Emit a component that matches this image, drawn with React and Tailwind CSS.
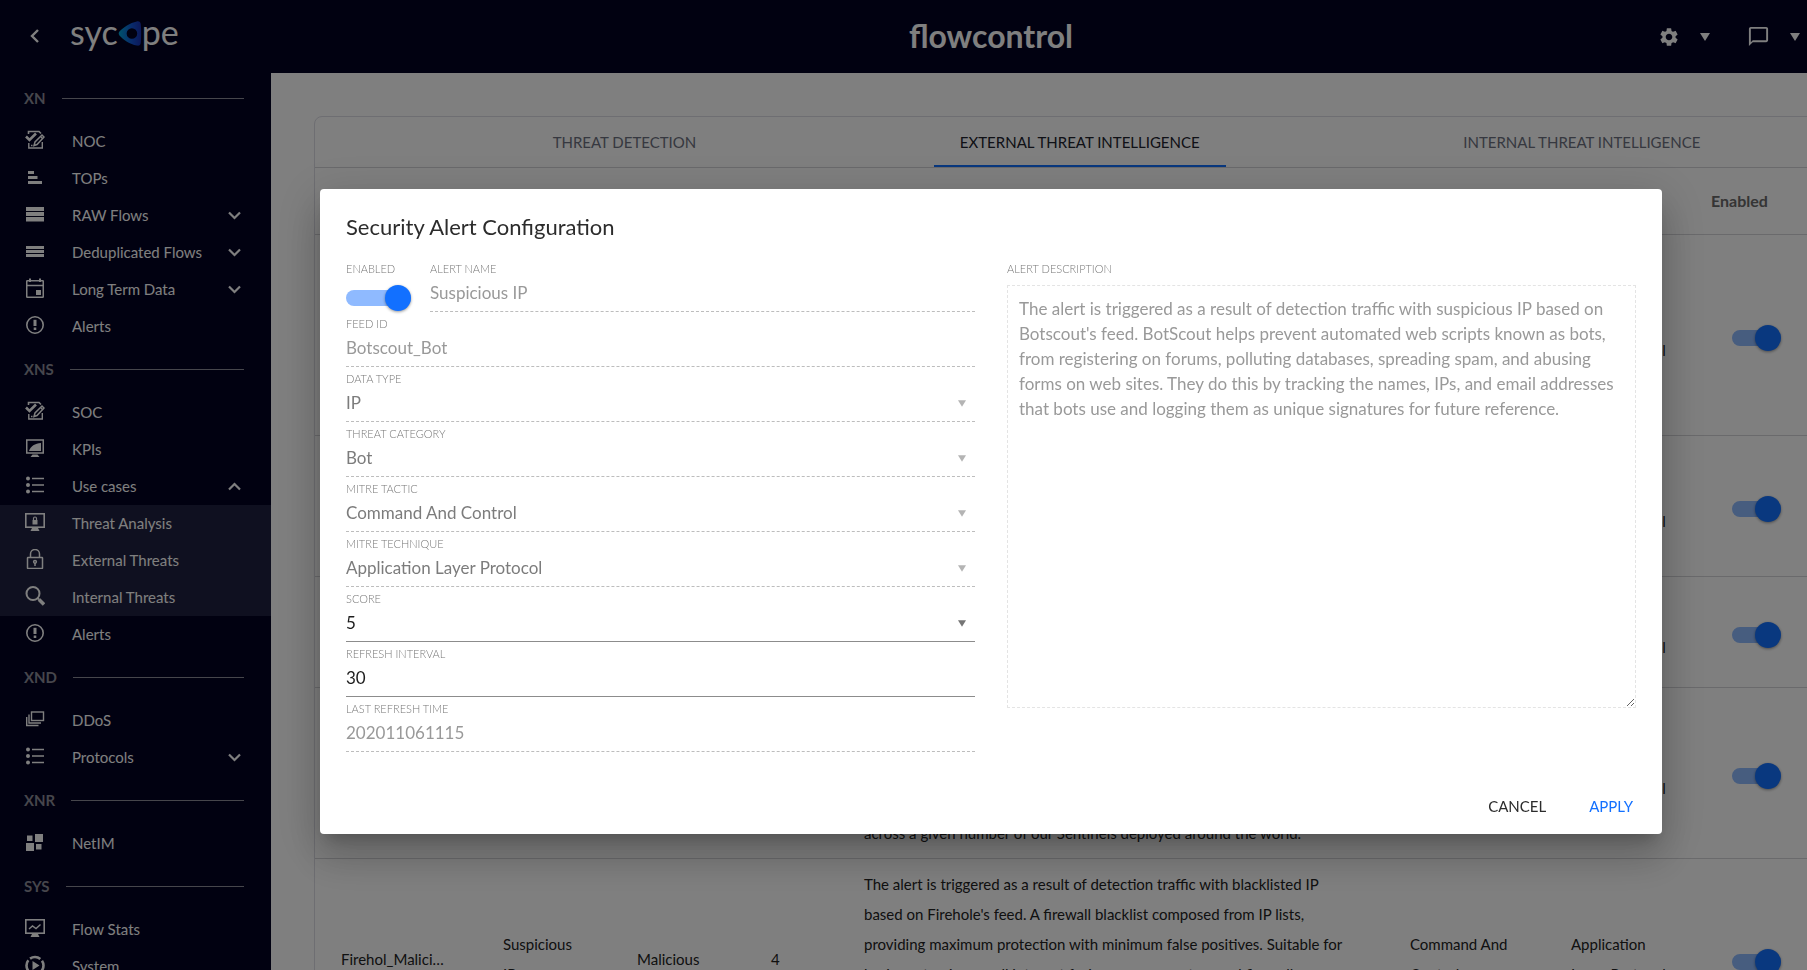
import { Fragment, useState } from "react";
import { MdSettings, MdChatBubbleOutline } from "react-icons/md";

const icons = {
  edit: (
    <g fill="none" stroke="currentColor">
      <path d="M3.5 4V1.5H14L16 3.5" strokeWidth="1.6" />
      <path d="M1 6.5L4.5 10L11 3.5" strokeWidth="2.6" />
      <path d="M3.8 13V18H17.3V12" strokeWidth="1.4" />
      <path d="M9 15.5L10 12L17 5L19 7L12 14.5Z" strokeWidth="1.5" />
      <path d="M15.5 6.5L17.5 8.5" strokeWidth="1.2" />
      <path d="M6 15.5H7.5" strokeWidth="1.4" />
    </g>
  ),
  bars: (
    <g fill="currentColor">
      <path d="M3 4H9V7H3zM3 9H12.500V12H3zM3 14H17V17H3z" />
    </g>
  ),
  rows4: (
    <g fill="currentColor">
      <path d="M1 3H19V7H1zM1 8H19V12H1zM1 13H19V17.500H1z" />
    </g>
  ),
  rows3: (
    <g fill="currentColor">
      <path d="M1 5H19V8H1zM1 9H19V12H1zM1 13H19V16H1z" />
    </g>
  ),
  calendar: (
    <g fill="none" stroke="currentColor" strokeWidth="1.5">
      <rect x="1.75" y="2.75" width="16.5" height="16.500" rx="0.5" />
      <path d="M2 7.500H18" />
      <path d="M5 0.500V4M15 0.500V4" strokeWidth="2" />
      <rect x="11" y="12" width="5" height="5" fill="currentColor" stroke="none" />
    </g>
  ),
  alert: (
    <g fill="none" stroke="currentColor">
      <circle cx="10" cy="10" r="8.200" strokeWidth="1.6" />
      <path d="M10 4.800V11" strokeWidth="3" />
      <path d="M10 12.500V15" strokeWidth="2.600" />
    </g>
  ),
  kpi: (
    <g fill="none" stroke="currentColor" strokeWidth="1.5">
      <rect x="1.75" y="2" width="16.500" height="13" />
      <path d="M4 13C5.500 8 10 5.500 16 5V13Z" fill="currentColor" stroke="none" />
      <path d="M7.500 16.500H12.500L14.500 19H5.500Z" fill="currentColor" stroke="none" />
    </g>
  ),
  list: (
    <g stroke="currentColor" strokeWidth="1.4" fill="none">
      <path d="M7 3.500H19M7 10H19M7 16.500H19" />
      <g fill="currentColor" stroke="none">
        <circle cx="3" cy="3.500" r="2" />
        <circle cx="3" cy="10" r="2" />
        <circle cx="3" cy="16.500" r="2" />
      </g>
    </g>
  ),
  screenLock: (
    <g fill="none" stroke="currentColor">
      <rect x="0.800" y="1.800" width="18.400" height="13.400" strokeWidth="1.6" />
      <path d="M7.500 8H12.500V12.500H7.500Z" fill="currentColor" stroke="none" />
      <path d="M8.500 8V6.500A1.500 1.500 0 0 1 11.500 6.500V8" strokeWidth="1.200" />
      <path d="M7 16H13L14.500 19H5.500Z" fill="currentColor" stroke="none" />
    </g>
  ),
  lock: (
    <g fill="none" stroke="currentColor" strokeWidth="1.5">
      <rect x="2.500" y="8.500" width="15" height="11" rx="0.5" />
      <path d="M5.500 8.500V5A4.500 4.500 0 0 1 14.500 5V8.500" />
      <circle cx="10" cy="12.800" r="1.400" />
      <path d="M10 14V17" />
    </g>
  ),
  search: (
    <g fill="none" stroke="currentColor">
      <circle cx="8" cy="7.500" r="6.500" strokeWidth="2" />
      <path d="M12.500 12L14 13.500" strokeWidth="2" />
      <path d="M14 13.500L19 18.500" strokeWidth="3.600" />
    </g>
  ),
  stack: (
    <g fill="none" stroke="currentColor" strokeWidth="1.4">
      <rect x="6.500" y="3" width="12" height="8.500" />
      <path d="M4 5.500V14H16M1.700 8V16.500H13.500" />
    </g>
  ),
  tiles: (
    <g fill="currentColor">
      <path d="M2 3.500H7.500V9H2zM10 2H18V10H10zM1 11H9V19H1zM11 12H16.500V17.500H11z" />
    </g>
  ),
  stats: (
    <g fill="none" stroke="currentColor" strokeWidth="1.6">
      <rect x="0.800" y="1.800" width="18.400" height="13.400" />
      <path d="M4 11L7.500 8L11 10.500L15.500 6.500" strokeWidth="1.400" />
      <path d="M7 16H13L14.500 19H5.500Z" fill="currentColor" stroke="none" />
    </g>
  ),
  system: (
    <g fill="none" stroke="currentColor" strokeWidth="2.600">
      <circle cx="10" cy="10.500" r="8.500" strokeDasharray="11 2.350" strokeDashoffset="5.500" />
      <path d="M7.500 6L14.500 10.500L7.500 15Z" fill="currentColor" stroke="none" />
    </g>
  ),
};

const sections = [
  {
    title: "XN",
    items: [
      { label: "NOC", icon: "edit" },
      { label: "TOPs", icon: "bars" },
      { label: "RAW Flows", icon: "rows4", arrow: "down" },
      { label: "Deduplicated Flows", icon: "rows3", arrow: "down" },
      { label: "Long Term Data", icon: "calendar", arrow: "down" },
      { label: "Alerts", icon: "alert" },
    ],
  },
  {
    title: "XNS",
    items: [
      { label: "SOC", icon: "edit" },
      { label: "KPIs", icon: "kpi" },
      { label: "Use cases", icon: "list", arrow: "up" },
      { label: "Threat Analysis", icon: "screenLock", sub: true },
      { label: "External Threats", icon: "lock", sub: true },
      { label: "Internal Threats", icon: "search", sub: true },
      { label: "Alerts", icon: "alert" },
    ],
  },
  {
    title: "XND",
    items: [
      { label: "DDoS", icon: "stack" },
      { label: "Protocols", icon: "list", arrow: "down" },
    ],
  },
  { title: "XNR", items: [{ label: "NetIM", icon: "tiles" }] },
  {
    title: "SYS",
    items: [
      { label: "Flow Stats", icon: "stats" },
      { label: "System", icon: "system" },
    ],
  },
];

const tabs = [
  "THREAT DETECTION",
  "EXTERNAL THREAT INTELLIGENCE",
  "INTERNAL THREAT INTELLIGENCE",
];

const feeds = [
  {
    id: "Botscout_Bot",
    category: "Bot",
    score: 5,
    description:
      "The alert is triggered as a result of detection traffic with\nsuspicious IP based on Botscout's feed. BotScout helps prevent\nautomated web scripts known as bots, from registering on\nforums, polluting databases, spreading spam, and abusing forms\non web sites. They do this by tracking the names, IPs, and email\naddresses that bots use.",
  },
  {
    id: "Cruzit_Attack",
    category: "Attack",
    score: 4,
    description:
      "The alert is triggered as a result of detection traffic with\nsuspicious IP based on CruzIT's feed. The list contains\nIP addresses of compromised machines\nscanning for vulnerabilities.",
  },
  {
    id: "Dshield_Scan",
    category: "Scanner",
    score: 4,
    description:
      "The alert is triggered as a result of detection traffic with\nsuspicious IP based on DShield's feed. The list\nsummarizes the top attacking subnets.",
  },
  {
    id: "Sentinel_Bad",
    category: "Malicious",
    score: 5,
    description:
      "The alert is triggered as a result of detection traffic with\nblacklisted IP based on the Sentinel's feed.\nThe list contains the most active\nbad IP addresses detected\nacross a given number of our Sentinels deployed around the world.",
  },
  {
    id: "Firehol_Malicious",
    category: "Malicious",
    score: 4,
    description:
      "The alert is triggered as a result of detection traffic with blacklisted IP\nbased on Firehole's feed. A firewall blacklist composed from IP lists,\nproviding maximum protection with minimum false positives. Suitable for\nbasic protection on all internet facing servers, routers and firewalls.\nIt includes the feeds of fullbogons,\nspamhaus and dshield.",
  },
];

function Caret({ className }) {
  return (
    <svg viewBox="0 0 10 8" className={className} fill="currentColor" aria-hidden="true">
      <path d="M0 0H10L5 8Z" />
    </svg>
  );
}

function Chevron({ up }) {
  return (
    <svg width="13" height="9" viewBox="0 0 13 9" fill="none" stroke="currentColor" strokeWidth="2.2">
      <path d={up ? "M1 7.500L6.500 2L12 7.500" : "M1 1.500L6.500 7L12 1.500"} />
    </svg>
  );
}

function Header() {
  return (
    <header className="grid h-[73px] shrink-0 grid-cols-[1fr_auto_1fr] items-center bg-[#020222] text-white">
      <div className="flex items-center pb-2.5 pl-[30px]">
        <button aria-label="Back" className="pt-2">
          <svg width="10" height="14" viewBox="0 0 10 14" fill="none" stroke="currentColor" strokeWidth="2.400">
            <path d="M8 1L2 7L8 13" />
          </svg>
        </button>
        <a href="#" aria-label="sycope" className="ml-[30px] flex items-center text-[34px] leading-10">
          <span>syc</span>
          <svg width="24" height="25" viewBox="0 0 24 26" className="mt-1" aria-hidden="true">
            <defs>
              <linearGradient id="logo" x1="0" y1="0" x2="1" y2="0">
                <stop offset="0" stopColor="#00a6d6" />
                <stop offset="0.600" stopColor="#1254d8" />
                <stop offset="1" stopColor="#1a2fb0" />
              </linearGradient>
            </defs>
            <path
              fill="url(#logo)"
              fillRule="evenodd"
              d="M1 11C0 12.500 0 13.500 1 15C5 19.500 12 24 19 25.500C21.500 26 23 25 23.200 22.500C23.800 16 23.800 10 23.200 3.500C23 1 21.500 0 19 0.500C12 2 5 6.500 1 11ZM14 7.500A5.500 5.500 0 1 1 14 18.500A5.500 5.500 0 1 1 14 7.500Z"
            />
          </svg>
          <span>pe</span>
        </a>
      </div>
      <h1 className="pb-0.5 text-[32px] leading-10 font-bold">flowcontrol</h1>
      <div className="flex items-center justify-end pr-[181px]">
        <button aria-label="Settings" className="flex items-center gap-[19px]">
          <MdSettings size={22} />
          <Caret className="h-2 w-3" />
        </button>
        <button aria-label="Messages" className="ml-9 flex items-center gap-[19px]">
          <MdChatBubbleOutline size={23} />
          <Caret className="h-2 w-3" />
        </button>
      </div>
    </header>
  );
}

function Sidebar() {
  return (
    <nav className="w-[271px] shrink-0 overflow-hidden bg-[#020222] pt-px text-[15px] text-white">
      {sections.map((section) => (
        <Fragment key={section.title}>
          <div className="flex h-[49px] items-center gap-4 pr-[27px] pl-6 text-[#8c8c98]">
            <h2 className="font-bold">{section.title}</h2>
            <div className="h-px flex-1 bg-[#8c8c98]" />
          </div>
          <ul>
            {section.items.map((item) => (
              <li key={item.label} className={item.sub ? "bg-[#1f2140]" : ""}>
                <a href="#" className="flex h-[37px] items-center pr-[30px] pl-[25px]">
                  <svg width="20" height="20" viewBox="0 0 20 20" className="mb-1 shrink-0" aria-hidden="true">
                    {icons[item.icon]}
                  </svg>
                  <span className="ml-[27px] flex-1">{item.label}</span>
                  {item.arrow && <Chevron up={item.arrow === "up"} />}
                </a>
              </li>
            ))}
          </ul>
        </Fragment>
      ))}
    </nav>
  );
}

function Toggle({ id, label, wide }) {
  const [on, setOn] = useState(true);
  return (
    <input
      id={id}
      type="checkbox"
      aria-label={label}
      checked={on}
      onChange={(e) => setOn(e.target.checked)}
      className={`flex h-4 cursor-pointer appearance-none items-center rounded-full bg-[#bdbdbd] before:size-[26px] before:shrink-0 before:rounded-full before:bg-white before:shadow-[0_1px_3px_rgba(0,0,0,0.4)] before:content-[''] checked:justify-end checked:bg-[#8fbaff] checked:before:bg-[#1270ff] ${
        wide ? "w-[65px]" : "w-[49px]"
      }`}
    />
  );
}

function FeedTable() {
  const [active, setActive] = useState(1);

  return (
    <section className="mx-[43px] mt-[43px] rounded-lg border border-[#dcdce4] bg-white">
      <div role="tablist" className="flex h-[51px] justify-evenly border-b border-[#d4d4d8]">
        {tabs.map((tab, i) => (
          <button
            key={tab}
            role="tab"
            aria-selected={active === i}
            onClick={() => setActive(i)}
            className={`border-b-2 px-[26px] pt-0.5 text-[15px] ${
              active === i
                ? "border-[#1270ff] text-[#20222c]"
                : "border-transparent text-[#6c7080]"
            }`}
          >
            {tab}
          </button>
        ))}
      </div>
      <table className="w-full table-fixed text-left text-[15px] leading-[30px] text-[#222222]">
        <colgroup>
          <col className="w-[162px]" />
          <col className="w-[134px]" />
          <col className="w-[134px]" />
          <col className="w-[93px]" />
          <col className="w-[546px]" />
          <col className="w-[161px]" />
          <col className="w-[161px]" />
          <col />
        </colgroup>
        <thead>
          <tr className="h-[66px] border-b border-[#d4d4d8] text-base text-[#6a6a6a]">
            <th className="pl-[26px]">Feed ID</th>
            <th className="pl-[26px]">Name</th>
            <th className="pl-[26px]">Category</th>
            <th className="pl-[26px]">Score</th>
            <th className="pl-[26px]">Description</th>
            <th className="pl-[26px]">Mitre Tactic</th>
            <th className="pl-[26px]">Technique</th>
            <th className="pl-[5px]">Enabled</th>
          </tr>
        </thead>
        <tbody>
          {feeds.map((feed) => (
            <tr key={feed.id} className="border-b border-[#d4d4d8]">
              <td className="truncate py-2.5 pr-[30px] pl-[26px]">{feed.id}</td>
              <td className="py-2.5 pr-8 pl-[26px]">Suspicious IP</td>
              <td className="py-2.5 pl-[26px]">{feed.category}</td>
              <td className="py-2.5 pl-[26px]">{feed.score}</td>
              <td className="py-2.5 pl-[26px] whitespace-pre">{feed.description}</td>
              <td className="py-2.5 pr-6 pl-[26px]">Command And Control</td>
              <td className="py-2.5 pr-6 pl-[26px]">Application Layer Protocol</td>
              <td className="pt-3.5 pb-2 pl-[26px]">
                <Toggle label={`Enable ${feed.id}`} />
              </td>
            </tr>
          ))}
        </tbody>
      </table>
    </section>
  );
}

function Field({ id, label, children }) {
  return (
    <div className="flex h-[55px] flex-1 flex-col pt-1">
      <label htmlFor={id} className="text-[11px] leading-4 font-light text-[#777777]">
        {label}
      </label>
      {children}
    </div>
  );
}

function TextField({ id, label, value, disabled }) {
  return (
    <Field id={id} label={label}>
      <input
        id={id}
        type="text"
        defaultValue={value}
        disabled={disabled}
        className="w-full flex-1 border-b border-[#8c8c8c] pb-0.5 text-[17px] text-[#1c1c1c] outline-none disabled:border-dashed disabled:border-[#bdbdbd] disabled:text-[#999999]"
      />
    </Field>
  );
}

function SelectField({ id, label, value, options = [value], disabled }) {
  return (
    <Field id={id} label={label}>
      <div className="relative flex flex-1">
        <select
          id={id}
          defaultValue={value}
          disabled={disabled}
          className="peer w-full appearance-none border-b border-[#8c8c8c] pb-0.5 text-[17px] text-[#1c1c1c] opacity-100 outline-none disabled:border-dashed disabled:border-[#bdbdbd] disabled:text-[#7c7c7c]"
        >
          {options.map((option) => (
            <option key={option}>{option}</option>
          ))}
        </select>
        <Caret className="pointer-events-none absolute top-[13px] right-[9px] h-[7px] w-2 text-[#757575] peer-disabled:text-[#b4b4b4]" />
      </div>
    </Field>
  );
}

function AlertDialog() {
  return (
    <div
      role="dialog"
      aria-labelledby="dialog-title"
      className="w-full max-w-[1342px] rounded bg-white px-[26px] pt-6 shadow-[0_11px_15px_-7px_rgba(0,0,0,0.2),0_24px_38px_3px_rgba(0,0,0,0.14),0_9px_46px_8px_rgba(0,0,0,0.12)]"
    >
      <h2 id="dialog-title" className="text-[22px] leading-7 text-[#2c2c2c]">
        Security Alert Configuration
      </h2>
      <div className="mt-4 grid grid-cols-2 gap-8">
        <div>
          <div className="flex gap-[19px]">
            <div className="flex flex-col gap-[13px] pt-1">
              <label htmlFor="enabled" className="text-[11px] leading-4 font-light text-[#777777]">
                ENABLED
              </label>
              <Toggle id="enabled" label="Enabled" wide />
            </div>
            <TextField id="name" label="ALERT NAME" value="Suspicious IP" disabled />
          </div>
          <TextField id="feed" label="FEED ID" value="Botscout_Bot" disabled />
          <SelectField id="type" label="DATA TYPE" value="IP" disabled />
          <SelectField id="category" label="THREAT CATEGORY" value="Bot" disabled />
          <SelectField id="tactic" label="MITRE TACTIC" value="Command And Control" disabled />
          <SelectField
            id="technique"
            label="MITRE TECHNIQUE"
            value="Application Layer Protocol"
            disabled
          />
          <SelectField id="score" label="SCORE" value="5" options={["1", "2", "3", "4", "5"]} />
          <TextField id="interval" label="REFRESH INTERVAL" value="30" />
          <TextField id="refreshed" label="LAST REFRESH TIME" value="202011061115" disabled />
        </div>
        <div className="flex flex-col pt-1">
          <label htmlFor="description" className="text-[11px] leading-4 font-light text-[#777777]">
            ALERT DESCRIPTION
          </label>
          <textarea
            id="description"
            disabled
            className="mt-2 h-[423px] w-full border border-dashed border-[#e4e4e4] px-[11px] py-2.5 text-[17px] leading-[25px] text-[#999999]"
            defaultValue="The alert is triggered as a result of detection traffic with suspicious IP based on Botscout's feed. BotScout helps prevent automated web scripts known as bots, from registering on forums, polluting databases, spreading spam, and abusing forms on web sites. They do this by tracking the names, IPs, and email addresses that bots use and logging them as unique signatures for future reference."
          />
        </div>
      </div>
      <div className="mt-8 flex h-[50px] items-start justify-end gap-[43px] pt-2.5 text-[15px] leading-6 text-[#2c2c2c]">
        <button>CANCEL</button>
        <button className="mr-[3px] text-[#1270ff]">APPLY</button>
      </div>
    </div>
  );
}

export default function App() {
  return (
    <div className="h-screen overflow-hidden font-['Lato',sans-serif]">
      <div className="-mr-[175px] flex h-full flex-col bg-white">
        <Header />
        <div className="flex min-h-0 flex-1">
          <Sidebar />
          <main className="min-w-0 flex-1 overflow-hidden">
            <FeedTable />
          </main>
        </div>
      </div>
      <div className="fixed inset-0 -right-[175px] -bottom-[53px] flex items-center justify-center bg-black/50">
        <AlertDialog />
      </div>
    </div>
  );
}
